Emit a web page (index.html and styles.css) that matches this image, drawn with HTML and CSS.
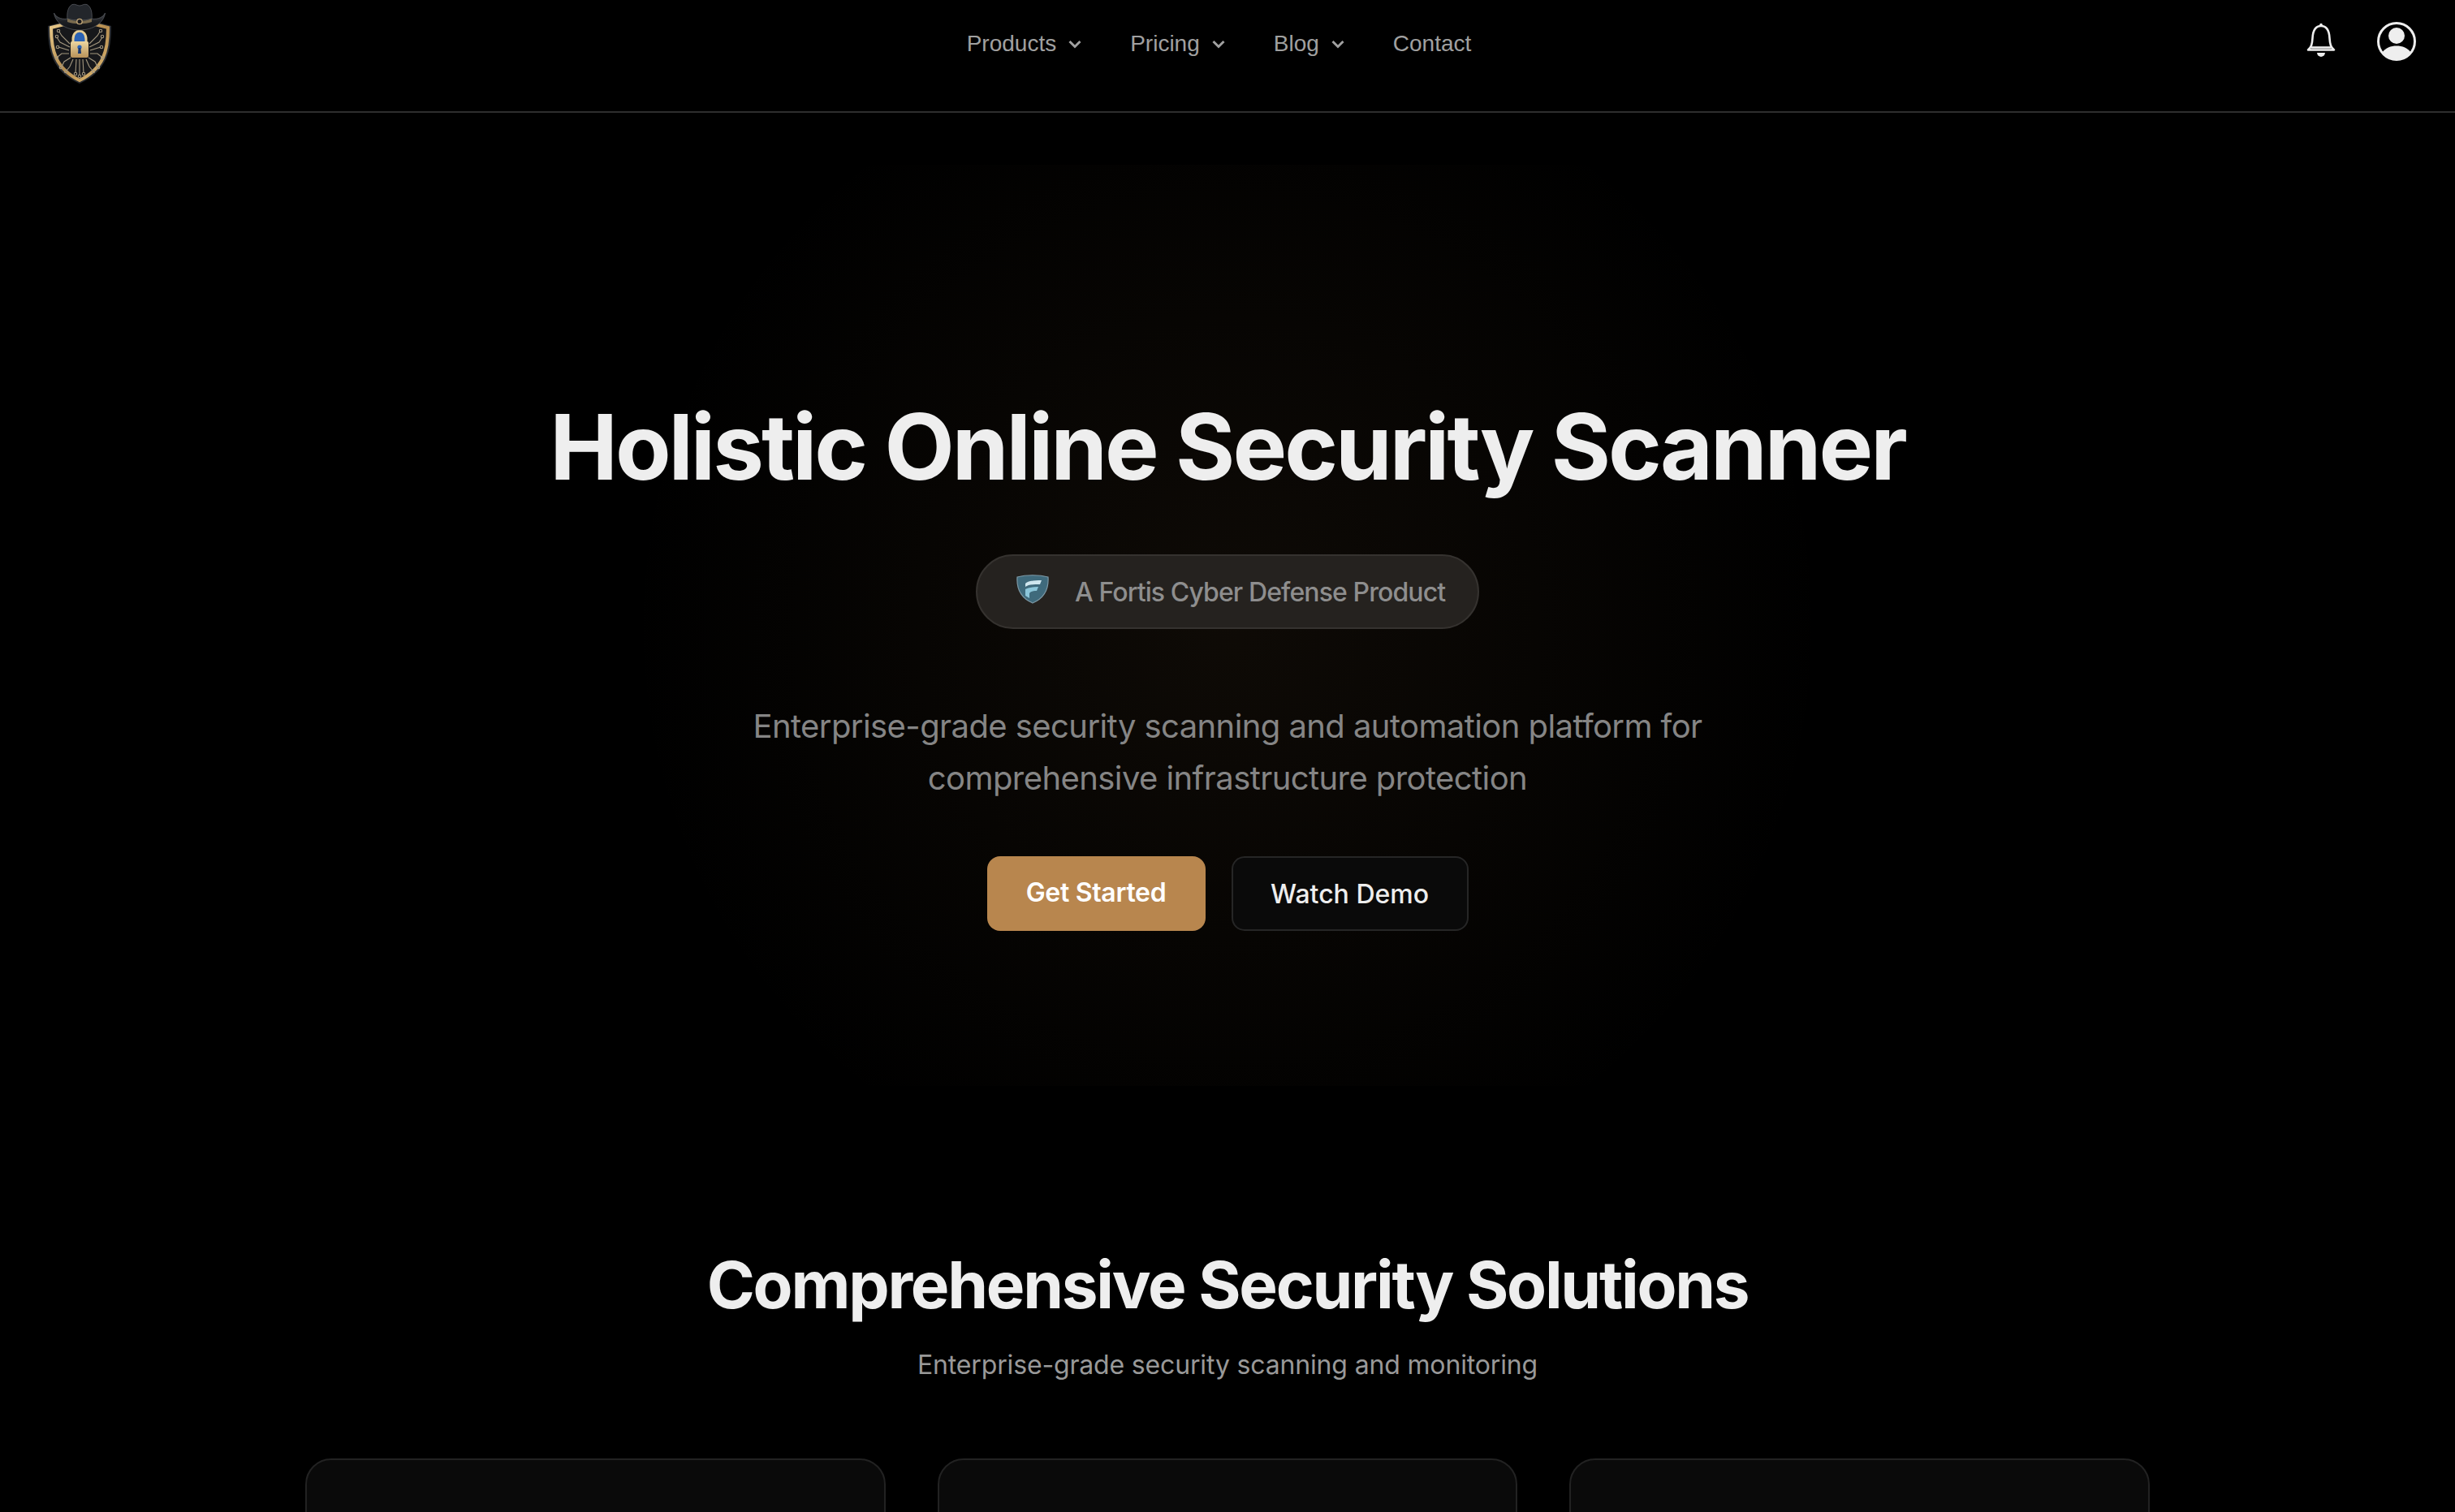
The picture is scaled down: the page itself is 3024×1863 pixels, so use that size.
FILE: index.html
```html
<!DOCTYPE html>
<html lang="en">
<head>
    <meta charset="UTF-8">
    <meta name="viewport" content="width=device-width, initial-scale=1.0">
    <title>Holistic Online Security Scanner</title>
    <link rel="stylesheet" href="styles.css">
</head>
<body>
    <header class="navbar">
        <a class="logo" href="#" aria-label="Home">
            <svg width="100" height="110" viewBox="0 0 100 110">
                <defs>
                    <linearGradient id="goldRim" x1="0" y1="0" x2="1" y2="1">
                        <stop offset="0" stop-color="#e8c98a"/>
                        <stop offset="0.5" stop-color="#b58c4e"/>
                        <stop offset="1" stop-color="#e2bd78"/>
                    </linearGradient>
                    <linearGradient id="goldLock" x1="0" y1="0" x2="0" y2="1">
                        <stop offset="0" stop-color="#ecd6a0"/>
                        <stop offset="1" stop-color="#b8925a"/>
                    </linearGradient>
                    <linearGradient id="hatBrim" x1="0" y1="0" x2="0" y2="1">
                        <stop offset="0" stop-color="#4a4d52"/>
                        <stop offset="0.5" stop-color="#1d1f23"/>
                        <stop offset="1" stop-color="#101114"/>
                    </linearGradient>
                </defs>
                <!-- shield -->
                <path d="M11 32 L30 27 L50 33 L70 27 L89 32 C89 62 84 88 50 103 C16 88 11 62 11 32 Z" fill="#2b2e33"/>
                <path d="M15 34 L31 30 L50 36 L69 30 L85 34 C85 62 80 84 50 99 C20 84 15 62 15 34 Z" fill="#17181b" stroke="url(#goldRim)" stroke-width="4"/>
                <!-- circuit traces -->
                <g fill="none" stroke="#a3977f" stroke-width="1.100">
                    <path d="M38 54 L28 44 L25 39"/>
                    <path d="M38 58 L26 52 L22 46"/>
                    <path d="M37 62 L24 58"/>
                    <path d="M37 66 L28 66 L23 70"/>
                    <path d="M39 71 L31 76 L28 82"/>
                    <path d="M42 73 L38 82 L34 87"/>
                    <path d="M46 73 L45 90"/>
                    <path d="M50 73 L50 92"/>
                    <path d="M54 73 L55 90"/>
                    <path d="M58 73 L62 82 L66 87"/>
                    <path d="M61 71 L69 76 L72 82"/>
                    <path d="M63 66 L72 66 L77 70"/>
                    <path d="M63 62 L76 58"/>
                    <path d="M62 58 L74 52 L78 46"/>
                    <path d="M62 54 L72 44 L75 39"/>
                    <circle cx="24" cy="38" r="1.700"/>
                    <circle cx="22" cy="45" r="1.700"/>
                    <circle cx="23" cy="58" r="1.700"/>
                    <circle cx="22" cy="71" r="1.700"/>
                    <circle cx="27" cy="83" r="1.700"/>
                    <circle cx="33" cy="88" r="1.700"/>
                    <circle cx="45" cy="91" r="1.700"/>
                    <circle cx="50" cy="94" r="1.700"/>
                    <circle cx="55" cy="91" r="1.700"/>
                    <circle cx="67" cy="88" r="1.700"/>
                    <circle cx="73" cy="83" r="1.700"/>
                    <circle cx="78" cy="71" r="1.700"/>
                    <circle cx="77" cy="58" r="1.700"/>
                    <circle cx="78" cy="45" r="1.700"/>
                    <circle cx="76" cy="38" r="1.700"/>
                </g>
                <!-- padlock -->
                <path d="M43 52 V48 C43 37 57 37 57 48 V52 Z" fill="#2a62b4"/>
                <path d="M42 52 V48 C42 35 58 35 58 48 V52" fill="none" stroke="#e4cd96" stroke-width="3"/>
                <rect x="39" y="51" width="22" height="20" rx="2" fill="url(#goldLock)"/>
                <circle cx="50" cy="58" r="2.600" fill="#2a62b4"/>
                <path d="M48.600 59 H51.400 L52 66 H48 Z" fill="#16366e"/>
                <!-- hat -->
                <path d="M35 25 C34 15 36 8 41 5.500 C45 4.500 47 7 50 7 C53 7 55 4.500 59 5.500 C64 8 66 15 65 25 Z" fill="#23262b" stroke="#55585e" stroke-width="0.800"/>
                <path d="M18.500 16 C22 23 30 24 36 23 C44 26 56 26 64 23 C70 24 78 23 81.500 16 C80 28 67 37 50 37 C33 37 20 28 18.500 16 Z" fill="url(#hatBrim)" stroke="#5c5f64" stroke-width="0.700"/>
                <path d="M35 23 C43 27 57 27 65 23 L65 27 C57 30 43 30 35 27 Z" fill="#7a6b4e"/>
                <circle cx="50" cy="26.500" r="3.200" fill="#1b1b1d" stroke="#c4a878" stroke-width="1.300"/>
            </svg>
        </a>
        <nav class="nav-links">
            <a class="nav-link" href="#">Products
                <svg class="chevron" width="18" height="18" viewBox="0 0 18 18"><path d="M2.500 6 L9 12.500 L15.500 6"/></svg>
            </a>
            <a class="nav-link" href="#">Pricing
                <svg class="chevron" width="18" height="18" viewBox="0 0 18 18"><path d="M2.500 6 L9 12.500 L15.500 6"/></svg>
            </a>
            <a class="nav-link" href="#">Blog
                <svg class="chevron" width="18" height="18" viewBox="0 0 18 18"><path d="M2.500 6 L9 12.500 L15.500 6"/></svg>
            </a>
            <a class="nav-link" href="#">Contact</a>
        </nav>
        <div class="nav-actions">
            <svg width="48" height="48" viewBox="0 0 48 48" aria-label="Notifications">
                <path class="bell-line" d="M8 35.500 C12 32 13 29 13.500 21 C14 11 18 6 24 6 C30 6 34 11 34.500 21 C35 29 36 32 40 35.500 Z"/>
                <path class="bell-line" d="M12 32.500 H36"/>
                <circle class="bell-fill" cx="24" cy="4.500" r="1.800"/>
                <path class="bell-fill" d="M19 39 H29 C28.500 45.500 19.500 45.500 19 39 Z"/>
            </svg>
            <svg width="48" height="50" viewBox="0 0 48 50" aria-label="Account">
                <circle class="user-ring" cx="24" cy="25" r="22.500"/>
                <circle class="bell-fill" cx="24" cy="18" r="10"/>
                <path class="bell-fill" d="M6 39 C10 33 17 30.500 24 30.500 C31 30.500 38 33 42 39 C38 44.500 31 47.500 24 47.500 C17 47.500 10 44.500 6 39 Z"/>
            </svg>
        </div>
    </header>

    <section class="hero">
        <h1 class="hero-title">Holistic Online Security Scanner</h1>
        <div class="badge">
            <svg width="40" height="36" viewBox="0 0 40 36">
                <path d="M1 3 C12 0 28 0 39 3 C40 18 34 29 20 35 C6 29 0 18 1 3 Z" fill="#3f6a7c" stroke="#7d99a6" stroke-width="1.200"/>
                <path d="M11 11 C14 8 20 7 31 7 L29 12 C22 12 15 12 11 15 Z" fill="#cfe6ef"/>
                <path d="M11 18 C14 16 20 15 27 15 L25 20 C20 20 17 21 16 23 L16 29 L11 26 Z" fill="#8cc6da"/>
            </svg>
            <span>A Fortis Cyber Defense Product</span>
        </div>
        <p class="hero-text">Enterprise-grade security scanning and automation platform for<br>comprehensive infrastructure protection</p>
        <div class="hero-buttons">
            <a class="btn btn-primary" href="#">Get Started</a>
            <a class="btn btn-outline" href="#">Watch Demo</a>
        </div>
    </section>

    <section class="solutions">
        <h2 class="solutions-title">Comprehensive Security Solutions</h2>
        <p class="solutions-text">Enterprise-grade security scanning and monitoring</p>
        <div class="card-grid">
            <div class="card"></div>
            <div class="card"></div>
            <div class="card"></div>
        </div>
    </section>
</body>
</html>
```

FILE: styles.css
```css
html, body {
    height: 100%;
    margin: 0;
    overflow: hidden;
    background-color: #000;
    font-family: Inter, "Liberation Sans", sans-serif;
    color: #eee;
}
a {
    text-decoration: none;
}

/* top bar */
.navbar {
    display: flex;
    justify-content: space-between;
    align-items: flex-start;
    height: 137px;
    padding: 0 48px;
    border-bottom: 2px solid #2e2e2e;
}
.logo {
    display: block;
    width: 120px;
    height: 110px;
}
.nav-links {
    display: flex;
    gap: 59px;
    padding-top: 33px;
}
.nav-link {
    display: flex;
    align-items: center;
    gap: 14px;
    font-family: "Liberation Sans", Arial, sans-serif;
    font-size: 28px;
    line-height: 42px;
    color: #a0a0a0;
}
.chevron {
    fill: none;
    stroke: #a0a0a0;
    stroke-width: 3;
}
.nav-actions {
    display: flex;
    align-items: flex-start;
    gap: 45px;
    padding-top: 26px;
}
.bell-line {
    fill: none;
    stroke: #eee;
    stroke-width: 2.600;
    stroke-linejoin: round;
}
.bell-fill {
    fill: #eee;
}
.user-ring {
    fill: none;
    stroke: #eee;
    stroke-width: 3;
}

/* hero */
.hero {
    display: flex;
    flex-direction: column;
    align-items: center;
    box-sizing: border-box;
    width: 1776px;
    height: 1135px;
    margin: 64px auto 0;
    padding-top: 278px;
    background: radial-gradient(circle, rgba(184, 134, 78, 0.08) 0%, rgba(184, 134, 78, 0) 70%);
}
.hero-title {
    margin: 0 0 64px;
    font-size: 112px;
    line-height: 138px;
    font-weight: 700;
    letter-spacing: -0.027em;
    white-space: nowrap;
    color: #eee;
}
.badge {
    display: flex;
    align-items: center;
    gap: 32px;
    box-sizing: border-box;
    width: 620px;
    height: 92px;
    padding: 0 40px 0 48px;
    background-color: #25221f;
    border: 2px solid #35322f;
    border-radius: 46px;
    font-size: 32px;
    font-weight: 500;
    letter-spacing: -0.9px;
    color: #8e8e8e;
    white-space: nowrap;
}
.badge svg {
    flex-shrink: 0;
    margin-top: -6px;
}
.hero-text {
    margin: 88px 0 64px;
    font-size: 40px;
    line-height: 64px;
    letter-spacing: -0.58px;
    text-align: center;
    color: #858585;
}
.hero-buttons {
    display: flex;
    gap: 32px;
}
.btn {
    display: flex;
    align-items: center;
    justify-content: center;
    box-sizing: border-box;
    height: 92px;
    border-radius: 16px;
    font-size: 32px;
    font-weight: 500;
}
.btn-primary {
    width: 269px;
    padding-bottom: 4px;
    background-color: #b8864e;
    font-weight: 600;
    letter-spacing: -0.3px;
    color: #fff;
}
.btn-outline {
    width: 292px;
    background-color: #0a0a0a;
    border: 2px solid #262626;
    color: #eee;
}

/* solutions */
.solutions {
    margin-top: 195px;
    padding: 0 376px;
    text-align: center;
}
.solutions-title {
    margin: 0;
    font-size: 80px;
    line-height: 100px;
    font-weight: 700;
    letter-spacing: -0.028em;
    color: #eee;
}
.solutions-text {
    margin: 25px 0 0;
    font-size: 32px;
    line-height: 48px;
    letter-spacing: -0.16px;
    color: #999;
}
.card-grid {
    display: grid;
    grid-template-columns: repeat(3, 1fr);
    gap: 64px;
    margin-top: 91px;
}
.card {
    height: 400px;
    background-color: #0a0a0a;
    border: 2px solid #222;
    border-radius: 32px;
}
```
